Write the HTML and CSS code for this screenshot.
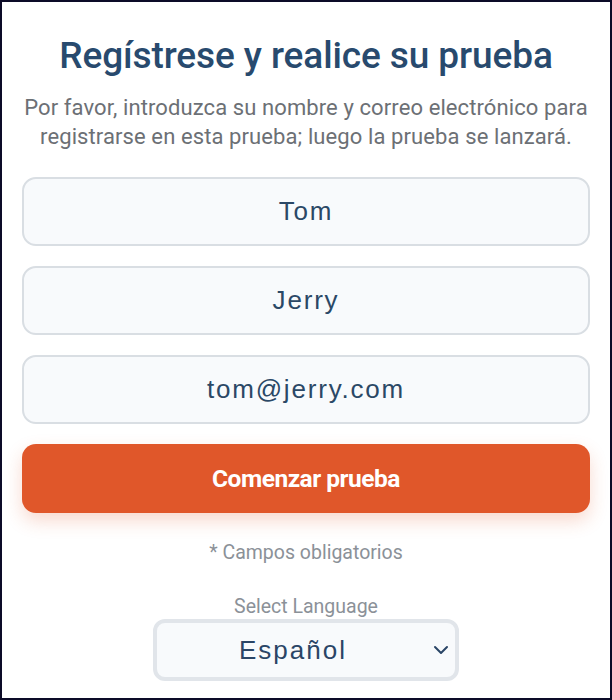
FILE: index.html
```html
<!DOCTYPE html>
<html lang="es">
<head>
<meta charset="utf-8">
<title>Regístrese y realice su prueba</title>
<link rel="stylesheet" href="styles.css">
</head>
<body>
<main class="frame">
  <h1 class="title">Regístrese y realice su prueba</h1>
  <p class="intro">Por favor, introduzca su nombre y correo electrónico para registrarse en esta prueba; luego la prueba se lanzará.</p>
  <form class="form">
    <input class="field" type="text" value="Tom">
    <input class="field" type="text" value="Jerry">
    <input class="field" type="email" value="tom@jerry.com">
    <button class="submit" type="button">Comenzar prueba</button>
  </form>
  <p class="required">* Campos obligatorios</p>
  <div class="lang">
    <label class="lang-label" for="lang">Select Language</label>
    <div class="select-wrap">
      <select id="lang" class="select">
        <option>Español</option>
      </select>
      <svg class="chevron" width="16" height="10" viewBox="0 0 16 10" aria-hidden="true">
        <path d="M2 2 L8 8 L14 2" fill="none" stroke="#2a4566" stroke-width="2" stroke-linecap="round" stroke-linejoin="round"/>
      </svg>
    </div>
  </div>
</main>
</body>
</html>
```
FILE: styles.css
```css
* { box-sizing: border-box; }
html, body { margin: 0; padding: 0; background: #ffffff; }
.frame {
  width: 612px;
  height: 700px;
  border: 2px solid #0c0b28;
  padding: 33px 20px 0;
  display: flex;
  flex-direction: column;
  align-items: center;
  font-family: Roboto, "Liberation Sans", sans-serif;
  background: #ffffff;
}
.title {
  margin: 0;
  font-size: 37px;
  line-height: 42px;
  font-weight: 500;
  color: #284a6e;
  text-align: center;
  letter-spacing: -0.1px;
}
.intro {
  margin: 16px 0 0;
  font-size: 22px;
  line-height: 29px;
  letter-spacing: 0.1px;
  color: #6c7075;
  text-align: center;
}
.form {
  margin-top: 26px;
  width: 100%;
  display: flex;
  flex-direction: column;
  gap: 20px;
}
.field {
  width: 100%;
  height: 69px;
  border: 2px solid #d9dee3;
  border-radius: 14px;
  background: #f8fafc;
  font-family: "Liberation Sans", Arial, sans-serif;
  font-size: 26px;
  letter-spacing: 1.8px;
  color: #2b4866;
  text-align: center;
  outline: none;
  padding: 0 12px;
}
.submit {
  height: 69px;
  width: 100%;
  border: none;
  border-radius: 14px;
  background: #e0572a;
  color: #ffffff;
  font-family: Roboto, "Liberation Sans", sans-serif;
  font-size: 24.5px;
  font-weight: 700;
  letter-spacing: -0.5px;
  box-shadow: 0 8px 18px rgba(224, 87, 42, 0.22);
}
.required {
  margin: 28px 0 0;
  font-size: 19.5px;
  line-height: 24px;
  color: #8b9198;
}
.lang {
  margin-top: 31px;
  display: flex;
  flex-direction: column;
  align-items: center;
}
.lang-label {
  font-size: 19.5px;
  line-height: 22px;
  color: #8b9198;
}
.select-wrap {
  position: relative;
  margin-top: 1px;
}
.select {
  appearance: none;
  -webkit-appearance: none;
  width: 306px;
  height: 62px;
  border: 4px solid #e1e5ea;
  border-radius: 12px;
  background: #f8fafc;
  font-family: "Liberation Sans", Arial, sans-serif;
  font-size: 26px;
  letter-spacing: 2px;
  color: #2a4566;
  text-align: center;
  text-align-last: center;
  padding: 0 36px 0 10px;
  outline: none;
}
.chevron {
  position: absolute;
  right: 10px;
  top: 26px;
}
```
